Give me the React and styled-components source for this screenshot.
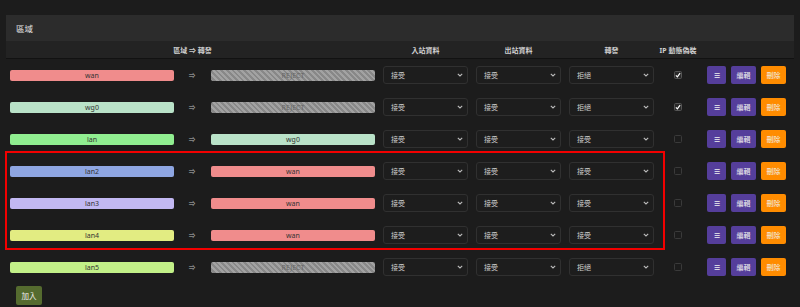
import React from 'react';
import styled, { createGlobalStyle } from 'styled-components';

const GlobalStyle = createGlobalStyle`
  html, body {
    margin: 0;
    padding: 0;
    background: #1c1c1c;
  }
  body {
    font-family: 'Noto Sans', 'Noto Sans CJK TC', sans-serif;
    color: #d8d8d8;
  }
`;

const rules = [
  { src: 'wan', srcColor: '#f08c8c', dest: null, input: '接受', output: '接受', forward: '拒絕', masq: true },
  { src: 'wg0', srcColor: '#b9e2c8', dest: null, input: '接受', output: '接受', forward: '拒絕', masq: true },
  { src: 'lan', srcColor: '#90ee90', dest: 'wg0', destColor: '#b9e2c8', input: '接受', output: '接受', forward: '接受' },
  { src: 'lan2', srcColor: '#8ea6e2', dest: 'wan', destColor: '#f08c8c', input: '接受', output: '接受', forward: '接受', marked: true },
  { src: 'lan3', srcColor: '#c2b8f2', dest: 'wan', destColor: '#f08c8c', input: '接受', output: '接受', forward: '接受', marked: true },
  { src: 'lan4', srcColor: '#e2ec82', dest: 'wan', destColor: '#f08c8c', input: '接受', output: '接受', forward: '接受', marked: true },
  { src: 'lan5', srcColor: '#c2f088', dest: null, input: '接受', output: '接受', forward: '拒絕' },
];

export default function App() {
  const plain = rules.filter((r) => !r.marked);
  const marked = rules.filter((r) => r.marked);
  return (
    <Page>
      <GlobalStyle />
      <Panel>
        <PanelTitle>區域</PanelTitle>
        <HeadRow>
          <HeadCell span>區域 ⇒ 轉發</HeadCell>
          <HeadCell select>入站資料</HeadCell>
          <HeadCell select>出站資料</HeadCell>
          <HeadCell select>轉發</HeadCell>
          <HeadCell>IP 動態偽裝</HeadCell>
          <HeadCell />
        </HeadRow>
      </Panel>
      <Rows>
        {plain.slice(0, 3).map((r) => (
          <RuleRow key={r.src} rule={r} />
        ))}
        <MarkedGroup>
          {marked.map((r) => (
            <RuleRow key={r.src} rule={r} />
          ))}
          <Highlight />
        </MarkedGroup>
        {plain.slice(3).map((r) => (
          <RuleRow key={r.src} rule={r} />
        ))}
      </Rows>
      <AddButton>加入</AddButton>
    </Page>
  );
}

function RuleRow({ rule }) {
  return (
    <Row>
      <Zone color={rule.srcColor}>{rule.src}</Zone>
      <Arrow>⇒</Arrow>
      {rule.dest ? <Zone color={rule.destColor}>{rule.dest}</Zone> : <Zone reject>REJECT</Zone>}
      <SelectCell><FakeSelect>{rule.input}<Chevron /></FakeSelect></SelectCell>
      <SelectCell><FakeSelect>{rule.output}<Chevron /></FakeSelect></SelectCell>
      <SelectCell><FakeSelect>{rule.forward}<Chevron /></FakeSelect></SelectCell>
      <CheckCell>
        <Check checked={rule.masq}>
          {rule.masq && (
            <svg width="6" height="6" viewBox="0 0 10 10">
              <path d="M1.5 5.5 L4 8 L8.5 2" fill="none" stroke="#fff" strokeWidth="2" />
            </svg>
          )}
        </Check>
      </CheckCell>
      <Actions>
        <Btn kind="menu">☰</Btn>
        <Btn kind="edit">編輯</Btn>
        <Btn kind="del">刪除</Btn>
      </Actions>
    </Row>
  );
}

function Chevron() {
  return (
    <ChevronSvg width="6" height="4" viewBox="0 0 6 4">
      <path d="M0.8 0.8 L3 3 L5.2 0.8" fill="none" stroke="#bbb" strokeWidth="1.1" />
    </ChevronSvg>
  );
}

const grid = `
  display: grid;
  grid-template-columns: 164px 37px 164px 93px 93px 93px 48px 1fr;
  align-items: center;
`;

const Page = styled.div`
  width: 800px;
  height: 307px;
  box-sizing: border-box;
  padding: 15px 6px 0;
  overflow: hidden;
`;

const Panel = styled.div`
  background: #232323;
  border-bottom: 1px solid #121212;
`;

const PanelTitle = styled.div`
  height: 26px;
  background: #2c2c2c;
  padding-left: 10px;
  display: flex;
  align-items: center;
  font-size: 8.5px;
  color: #e6e6e6;
`;

const HeadRow = styled.div`
  ${grid}
  height: 17px;
  padding-left: 4px;
`;

const HeadCell = styled.div`
  grid-column: ${(p) => (p.span ? 'span 3' : 'auto')};
  padding-left: ${(p) => (p.select ? '8px' : '0')};
  text-align: center;
  font-size: 7px;
  font-weight: 700;
  color: #cfcfcf;
  white-space: nowrap;
`;

const Rows = styled.div`
  display: flex;
  flex-direction: column;
`;

const MarkedGroup = styled.div`
  position: relative;
  display: flex;
  flex-direction: column;
`;

const Highlight = styled.div`
  position: absolute;
  left: -1px;
  top: -4px;
  width: 660px;
  bottom: 1px;
  border: 2px solid #f20000;
  box-sizing: border-box;
  pointer-events: none;
`;

const Row = styled.div`
  ${grid}
  height: 32px;
  padding-left: 4px;
`;

const Zone = styled.div`
  height: 11px;
  border-radius: 2px;
  display: flex;
  align-items: center;
  justify-content: center;
  font-size: 7px;
  color: ${(p) => (p.reject ? '#666' : '#333')};
  background: ${(p) =>
    p.reject
      ? 'repeating-linear-gradient(45deg, #a2a2a2 0 2px, #888 2px 4px)'
      : p.color};
`;

const Arrow = styled.div`
  text-align: center;
  font-size: 6.5px;
  color: #bbb;
  padding-right: 1px;
`;

const SelectCell = styled.div`
  padding-left: 8px;
`;

const FakeSelect = styled.div`
  height: 18px;
  box-sizing: border-box;
  border: 1px solid #303030;
  border-radius: 3px;
  background: #1d1d1d;
  display: flex;
  align-items: center;
  justify-content: space-between;
  padding: 0 4px 0 7px;
  font-size: 7px;
  color: #d0d0d0;
`;

const ChevronSvg = styled.svg`
  display: block;
`;

const CheckCell = styled.div`
  display: flex;
  justify-content: center;
`;

const Check = styled.div`
  width: 8px;
  height: 8px;
  box-sizing: border-box;
  border: 1px solid ${(p) => (p.checked ? '#555' : '#3a3a3a')};
  border-radius: 1.5px;
  background: ${(p) => (p.checked ? '#2a2a2a' : '#1c1c1c')};
  display: flex;
  align-items: center;
  justify-content: center;
`;

const Actions = styled.div`
  display: flex;
  gap: 5px;
  padding-left: 5px;
`;

const btnColors = {
  menu: '#553e9b',
  edit: '#553e9b',
  del: '#ff8c00',
};

const Btn = styled.div`
  width: ${(p) => (p.kind === 'menu' ? '19px' : '25px')};
  height: 18px;
  border-radius: 2px;
  background: ${(p) => btnColors[p.kind]};
  color: #f0f0f0;
  font-size: 7px;
  display: flex;
  align-items: center;
  justify-content: center;
`;

const AddButton = styled.div`
  margin: 3px 0 0 10px;
  width: 26px;
  height: 19px;
  border-radius: 2px;
  background: #556b2f;
  color: #eee;
  font-size: 7.5px;
  display: flex;
  align-items: center;
  justify-content: center;
`;
